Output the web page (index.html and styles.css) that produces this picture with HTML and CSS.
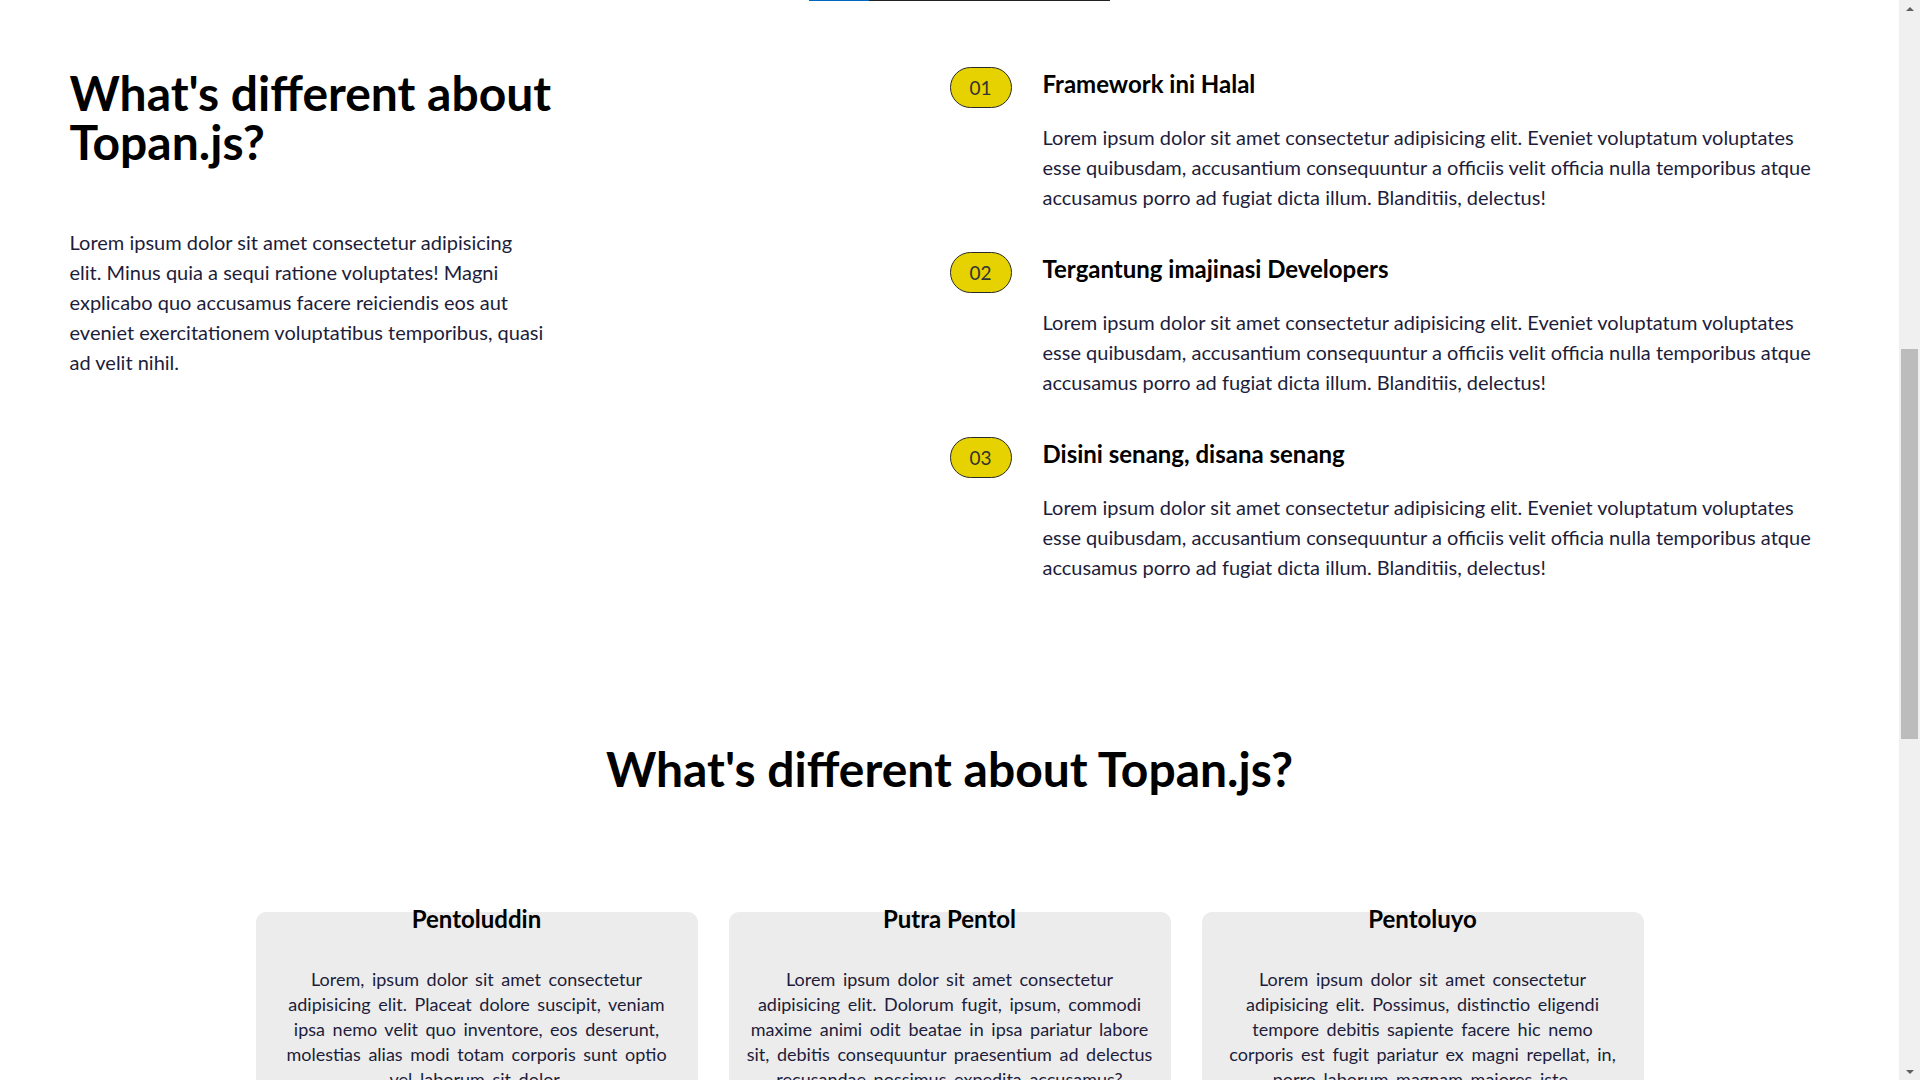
FILE: index.html
```html
<!DOCTYPE html>
<html lang="en">
<head>
<meta charset="utf-8">
<title>Topan.js</title>
<link rel="stylesheet" href="styles.css">
</head>
<body>
<div class="viewport">
  <main class="page">
    <div class="top-line"><span class="top-line-active"></span><span class="top-line-rest"></span></div>

    <section class="diff">
      <div class="diff-intro">
        <h1 class="diff-title">What's different about Topan.js?</h1>
        <p class="diff-lead">Lorem ipsum dolor sit amet consectetur adipisicing elit. Minus quia a sequi ratione voluptates! Magni explicabo quo accusamus facere reiciendis eos aut eveniet exercitationem voluptatibus temporibus, quasi ad velit nihil.</p>
      </div>
      <div class="diff-list">
        <div class="diff-item">
          <span class="badge">01</span>
          <div class="diff-body">
            <h3 class="diff-heading">Framework ini Halal</h3>
            <p class="diff-text">Lorem ipsum dolor sit amet consectetur adipisicing elit. Eveniet voluptatum voluptates esse quibusdam, accusantium consequuntur a officiis velit officia nulla temporibus atque accusamus porro ad fugiat dicta illum. Blanditiis, delectus!</p>
          </div>
        </div>
        <div class="diff-item">
          <span class="badge">02</span>
          <div class="diff-body">
            <h3 class="diff-heading">Tergantung imajinasi Developers</h3>
            <p class="diff-text">Lorem ipsum dolor sit amet consectetur adipisicing elit. Eveniet voluptatum voluptates esse quibusdam, accusantium consequuntur a officiis velit officia nulla temporibus atque accusamus porro ad fugiat dicta illum. Blanditiis, delectus!</p>
          </div>
        </div>
        <div class="diff-item">
          <span class="badge">03</span>
          <div class="diff-body">
            <h3 class="diff-heading">Disini senang, disana senang</h3>
            <p class="diff-text">Lorem ipsum dolor sit amet consectetur adipisicing elit. Eveniet voluptatum voluptates esse quibusdam, accusantium consequuntur a officiis velit officia nulla temporibus atque accusamus porro ad fugiat dicta illum. Blanditiis, delectus!</p>
          </div>
        </div>
      </div>
    </section>

    <section class="team">
      <h2 class="team-title">What's different about Topan.js?</h2>
      <div class="team-cards">
        <article class="card">
          <h3 class="card-title">Pentoluddin</h3>
          <p class="card-text">Lorem, ipsum dolor sit amet consectetur adipisicing elit. Placeat dolore suscipit, veniam ipsa nemo velit quo inventore, eos deserunt, molestias alias modi totam corporis sunt optio vel laborum sit dolor.</p>
        </article>
        <article class="card">
          <h3 class="card-title">Putra Pentol</h3>
          <p class="card-text">Lorem ipsum dolor sit amet consectetur adipisicing elit. Dolorum fugit, ipsum, commodi maxime animi odit beatae in ipsa pariatur labore sit, debitis consequuntur praesentium ad delectus recusandae possimus expedita accusamus?</p>
        </article>
        <article class="card">
          <h3 class="card-title">Pentoluyo</h3>
          <p class="card-text">Lorem ipsum dolor sit amet consectetur adipisicing elit. Possimus, distinctio eligendi tempore debitis sapiente facere hic nemo corporis est fugit pariatur ex magni repellat, in, porro laborum magnam maiores iste.</p>
        </article>
      </div>
    </section>
  </main>

  <div class="scrollbar" aria-hidden="true">
    <div class="sb-btn"><span class="sb-arrow-up"></span></div>
    <div class="sb-track"><div class="sb-thumb"></div></div>
    <div class="sb-btn"><span class="sb-arrow-down"></span></div>
  </div>
</div>
</body>
</html>
```

FILE: styles.css
```css
* { box-sizing: border-box; }

html, body {
  margin: 0;
  padding: 0;
  height: 100%;
  overflow: hidden;
  background: #ffffff;
}

body {
  font-family: "Segoe UI", Lato, "Noto Sans", sans-serif;
  color: #000;
}

.viewport {
  display: flex;
  width: 1920px;
  height: 1080px;
}

.page {
  flex: 1;
  min-width: 0;
  height: 1080px;
  overflow: hidden;
}

/* remnant underline of the previous section */
.top-line {
  display: flex;
  margin-left: 809px;
  width: 301px;
  height: 1px;
}
.top-line-active { width: 60px; background: #0067c0; }
.top-line-rest { flex: 1; background: #222; }

/* ---------- section 1 ---------- */
.diff {
  display: grid;
  grid-template-columns: 880px 880px;
  width: 1760px;
  margin: 0 auto;
  padding-top: 66px;
}

.diff-intro {
  width: 484px;
  padding-top: 1px;
}

.diff-title {
  margin: 0;
  font-size: 48px;
  line-height: 49px;
  font-weight: 700;
  color: #000;
}

.diff-lead {
  max-width: 476px;
  margin: 61px 0 0;
  font-size: 20px;
  line-height: 30px;
  color: #1d1d3b;
}

.diff-list {
  display: flex;
  flex-direction: column;
  gap: 40px;
}

.diff-item {
  display: flex;
  gap: 31px;
}

.badge {
  flex: none;
  width: 62px;
  height: 41px;
  border: 1px solid #2a2a2a;
  border-radius: 21px;
  background: #e6d200;
  display: flex;
  align-items: center;
  justify-content: center;
  font-size: 19px;
  color: #333;
}

.diff-body {
  width: 790px;
}

.diff-heading {
  margin: 0;
  font-size: 24px;
  line-height: 33px;
  font-weight: 700;
  color: #000;
}

.diff-text {
  margin: 22px 0 0;
  font-size: 20px;
  line-height: 30px;
  color: #1d1d3b;
}

/* ---------- section 2 ---------- */
.team {
  padding-top: 158px;
}

.team-title {
  margin: 0;
  text-align: center;
  font-size: 48px;
  line-height: 58px;
  font-weight: 700;
  color: #000;
}

.team-cards {
  display: grid;
  grid-template-columns: repeat(3, 442px);
  gap: 31px;
  justify-content: center;
  margin-top: 114px;
}

.card {
  background: #ececec;
  border-radius: 10px;
  padding: 0 18px 30px;
  text-align: center;
}

.card-title {
  margin: -6px 0 0;
  font-size: 24px;
  line-height: 26px;
  font-weight: 700;
  color: #000;
}

.card-text {
  margin: 35px 0 0;
  font-size: 18px;
  line-height: 25px;
  word-spacing: 3px;
  color: #1d1d3b;
}

/* ---------- fake scrollbar ---------- */
.scrollbar {
  flex: none;
  width: 21px;
  height: 1080px;
  background: #f0f0f0;
  display: flex;
  flex-direction: column;
}

.sb-btn {
  height: 17px;
  display: flex;
  align-items: center;
  justify-content: center;
}

.sb-arrow-up {
  width: 0;
  height: 0;
  border-left: 4px solid transparent;
  border-right: 4px solid transparent;
  border-bottom: 4px solid #606060;
}

.sb-arrow-down {
  width: 0;
  height: 0;
  border-left: 4px solid transparent;
  border-right: 4px solid transparent;
  border-top: 4px solid #606060;
}

.sb-track {
  flex: 1;
  padding: 332px 2px 0;
}

.sb-thumb {
  height: 390px;
  background: #bcbcbc;
}
```
